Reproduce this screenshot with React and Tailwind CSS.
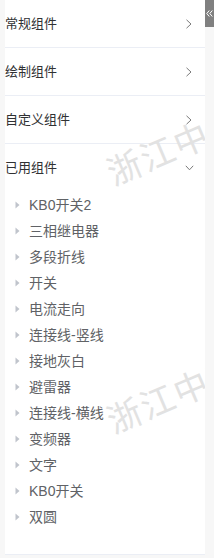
import React from "react";

const headers = ["常规组件", "绘制组件", "自定义组件"];
const items = [
  "KB0开关2",
  "三相继电器",
  "多段折线",
  "开关",
  "电流走向",
  "连接线-竖线",
  "接地灰白",
  "避雷器",
  "连接线-横线",
  "变频器",
  "文字",
  "KB0开关",
  "双圆",
];

function ChevronRight() {
  return (
    <svg width="8" height="10" viewBox="0 0 8 10" className="block">
      <path d="M1.5 0.8 L6 5 L1.5 9.2" fill="none" stroke="#7a7a7a" strokeWidth="1" />
    </svg>
  );
}

function ChevronDown() {
  return (
    <svg width="9" height="6" viewBox="0 0 9 6" className="block">
      <path d="M0.8 0.8 L4.5 4.8 L8.2 0.8" fill="none" stroke="#7a7a7a" strokeWidth="1" />
    </svg>
  );
}

function Caret() {
  return (
    <svg width="5" height="8" viewBox="0 0 5 8" className="block">
      <path d="M0.5 0.5 L4.5 4 L0.5 7.5 Z" fill="#c0c4cc" />
    </svg>
  );
}

function Watermark({ top }) {
  return (
    <div
      className="absolute left-[104px] pointer-events-none select-none whitespace-nowrap text-[34px] leading-[34px] tracking-[2px] text-[#e2e2e2] origin-left -rotate-[23deg]"
      style={{ top }}
    >
      浙江中兴
    </div>
  );
}

export default function App() {
  return (
    <div
      className="w-[214px] h-[558px] bg-[#f7f7f7] flex overflow-hidden"
      style={{ fontFamily: '"Liberation Sans", "Noto Sans CJK SC", sans-serif' }}
    >
      <div className="w-[5px] shrink-0" />
      <div className="w-[200px] shrink-0 h-[555px] bg-white border-b border-[#ebeef5] relative overflow-hidden">
        {headers.map((h) => (
          <div
            key={h}
            className="h-[48px] border-b border-[#ebeef5] flex items-center justify-between pr-[12px] text-[13px] text-[#303133]"
          >
            <span>{h}</span>
            <ChevronRight />
          </div>
        ))}
        <div className="h-[48px] flex items-center justify-between pr-[11px] text-[13px] text-[#303133]">
          <span>已用组件</span>
          <ChevronDown />
        </div>
        <div className="pb-[25px]">
          {items.map((it) => (
            <div key={it} className="h-[26px] flex items-center text-[14px] text-[#606266]">
              <div className="w-[24px] pl-[10px] flex items-center">
                <Caret />
              </div>
              <span>{it}</span>
            </div>
          ))}
        </div>
        <Watermark top={158} />
        <Watermark top={406} />
      </div>
      <div className="w-[9px] shrink-0 flex flex-col">
        <div className="h-[27px] bg-[#808080] flex items-center justify-center">
          <svg width="7" height="7" viewBox="0 0 7 7" className="block">
            <path d="M3.3 0.5 L0.8 3.5 L3.3 6.5 M6.3 0.5 L3.8 3.5 L6.3 6.5" fill="none" stroke="#ffffff" strokeWidth="1" />
          </svg>
        </div>
      </div>
    </div>
  );
}
